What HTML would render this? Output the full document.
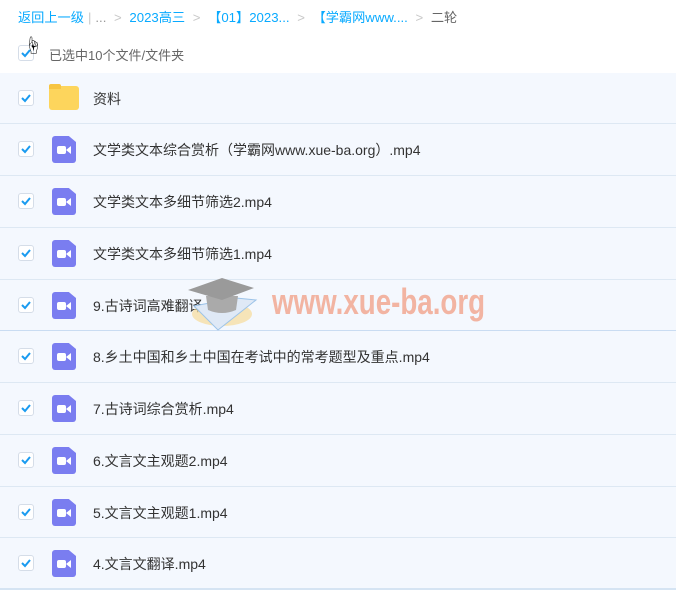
<!DOCTYPE html>
<html><head><meta charset="utf-8"><style>
*{margin:0;padding:0;box-sizing:border-box}
body{width:676px;height:606px;background:#fff;font-family:"Liberation Sans","Noto Sans CJK SC",sans-serif;position:relative;overflow:hidden}
.bc{position:absolute;top:7px;left:18px;font-size:13.2px;color:#09aaff;white-space:nowrap}
.bc .g{color:#c8c8c8;margin:0 4px}
.bc .d{color:#666}
.sel{position:absolute;top:45px;left:49px;font-size:13px;color:#666}
.cb{position:absolute;width:16px;height:16px;border:1px solid #d5dde8;border-radius:3px;background:#fff}
.cb svg{position:absolute;left:1px;top:1px}
.list{position:absolute;left:0;top:73px;width:676px}
.row{position:relative;width:676px;height:52px;background:#f4f8fe;border-bottom:1px solid #dde8f3}
.row .cb{left:18px;top:17px}
.row .t{position:absolute;left:93px;top:16px;font-size:14px;color:#333;white-space:nowrap}
.vid{position:absolute;left:52px;top:12px;width:24px;height:27px;background:#7a7df0;border-radius:3px;clip-path:polygon(0 0,70% 0,100% 22%,100% 100%,0 100%)}
.vid:after{content:"";position:absolute;left:5px;top:10px;width:9px;height:8px;background:#fff;border-radius:2px}
.vid:before{content:"";position:absolute;left:14px;top:10px;width:0;height:0;border-top:4px solid transparent;border-bottom:4px solid transparent;border-right:5px solid #fff}
.fold{position:absolute;left:49px;top:13px;width:30px;height:24px;background:#fdd55c;border-radius:3px}
.fold:before{content:"";position:absolute;left:0;top:-2px;width:12px;height:5px;background:#f7c542;border-radius:2px 2px 0 0}
.wm{position:absolute;left:272px;top:281px;font-family:"Liberation Sans",sans-serif;font-weight:bold;font-size:36px;color:#f2b4a2;transform:scaleX(0.77);transform-origin:left}
</style></head><body>
<div class="bc">返回上一级<span class="g">|</span><span style="color:#999">...</span><span class="g"> &gt; </span>2023高三<span class="g"> &gt; </span>【01】2023...<span class="g"> &gt; </span>【学霸网www....<span class="g"> &gt; </span><span class="d">二轮</span></div>
<div class="cb" style="left:18px;top:45px"><svg width="12" height="12" viewBox="0 0 12 12"><path d="M2 6l3 3 5-6" stroke="#1a9bf0" stroke-width="2" fill="none"/></svg></div>
<div class="sel">已选中10个文件/文件夹</div>
<div style="position:absolute;left:24px;top:32px;font-size:18px">☝</div>

<div class="list">
<div class="row" style="height:51px"><div class="cb"><svg width="12" height="12" viewBox="0 0 12 12"><path d="M2 6l3 3 5-6" stroke="#1a9bf0" stroke-width="2" fill="none"/></svg></div><div class="fold"></div><div class="t">资料</div></div>
<div class="row"><div class="cb"><svg width="12" height="12" viewBox="0 0 12 12"><path d="M2 6l3 3 5-6" stroke="#1a9bf0" stroke-width="2" fill="none"/></svg></div><div class="vid"></div><div class="t">文学类文本综合赏析（学霸网www.xue-ba.org）.mp4</div></div>
<div class="row"><div class="cb"><svg width="12" height="12" viewBox="0 0 12 12"><path d="M2 6l3 3 5-6" stroke="#1a9bf0" stroke-width="2" fill="none"/></svg></div><div class="vid"></div><div class="t">文学类文本多细节筛选2.mp4</div></div>
<div class="row"><div class="cb"><svg width="12" height="12" viewBox="0 0 12 12"><path d="M2 6l3 3 5-6" stroke="#1a9bf0" stroke-width="2" fill="none"/></svg></div><div class="vid"></div><div class="t">文学类文本多细节筛选1.mp4</div></div>
<div class="row" style="height:51px;border-bottom-color:#c9dcf2"><div class="cb"><svg width="12" height="12" viewBox="0 0 12 12"><path d="M2 6l3 3 5-6" stroke="#1a9bf0" stroke-width="2" fill="none"/></svg></div><div class="vid"></div><div class="t">9.古诗词高难翻译.mp4</div></div>
<div class="row"><div class="cb"><svg width="12" height="12" viewBox="0 0 12 12"><path d="M2 6l3 3 5-6" stroke="#1a9bf0" stroke-width="2" fill="none"/></svg></div><div class="vid"></div><div class="t">8.乡土中国和乡土中国在考试中的常考题型及重点.mp4</div></div>
<div class="row"><div class="cb"><svg width="12" height="12" viewBox="0 0 12 12"><path d="M2 6l3 3 5-6" stroke="#1a9bf0" stroke-width="2" fill="none"/></svg></div><div class="vid"></div><div class="t">7.古诗词综合赏析.mp4</div></div>
<div class="row"><div class="cb"><svg width="12" height="12" viewBox="0 0 12 12"><path d="M2 6l3 3 5-6" stroke="#1a9bf0" stroke-width="2" fill="none"/></svg></div><div class="vid"></div><div class="t">6.文言文主观题2.mp4</div></div>
<div class="row" style="height:51px"><div class="cb"><svg width="12" height="12" viewBox="0 0 12 12"><path d="M2 6l3 3 5-6" stroke="#1a9bf0" stroke-width="2" fill="none"/></svg></div><div class="vid"></div><div class="t">5.文言文主观题1.mp4</div></div>
<div class="row" style="border-bottom:2px solid #d5e4f3"><div class="cb"><svg width="12" height="12" viewBox="0 0 12 12"><path d="M2 6l3 3 5-6" stroke="#1a9bf0" stroke-width="2" fill="none"/></svg></div><div class="vid"></div><div class="t">4.文言文翻译.mp4</div></div>
</div>

<svg style="position:absolute;left:186px;top:270px" width="80" height="65" viewBox="0 0 80 65">
<ellipse cx="36" cy="44" rx="30" ry="12" fill="#f6dc9a" opacity="0.7"/>
<path d="M8 36 L32 60 L70 30 L50 28 Z" fill="#dfe9f6" stroke="#9cc3e8"/>
<path d="M20 26 L22 40 Q36 46 50 40 L52 26 Z" fill="#aaa"/>
<path d="M2 20 L36 8 L68 18 L36 30 Z" fill="#9a9a9a"/>
</svg>
<div class="wm">www.xue-ba.org</div>
</body></html>
